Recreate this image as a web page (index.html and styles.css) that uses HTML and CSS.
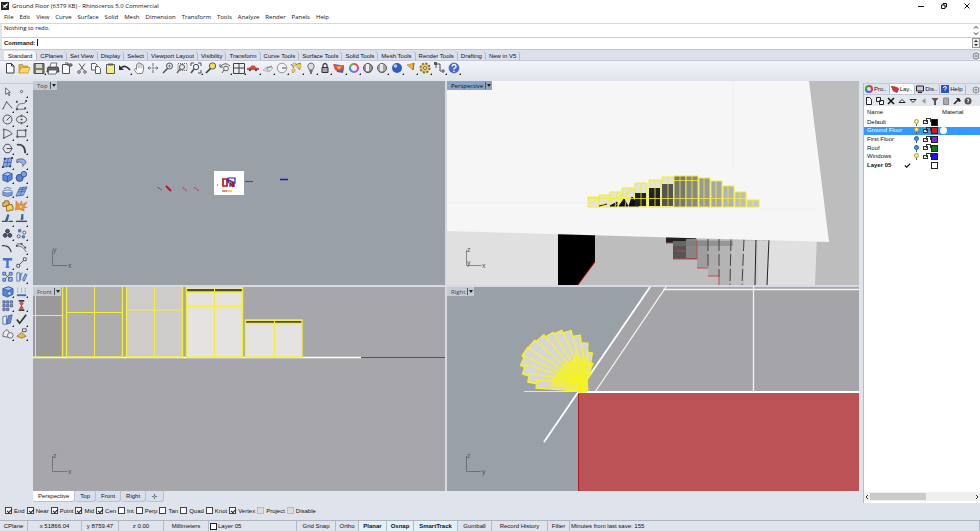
FILE: index.html
```html
<!DOCTYPE html>
<html lang="en">
  <head>
    <meta charset="UTF-8" />
    <meta name="viewport" content="width=device-width, initial-scale=1.0" />
    <title>Ground Floor (6379 KB) - Rhinoceros 5.0 Commercial</title>
    <link rel="stylesheet" href="styles.css">
  </head>
  <body>
    <header class="titlebar">
      <svg class="app-icon" viewBox="0 0 9 9"><rect width="9" height="9" fill="#222"/><path d="M1 2l2 2 2-1 3-2-1 3-2 1 2 2-3-1-2 1 1-2z" fill="#fff"/></svg>
      <span class="title">Ground Floor (6379 KB) - Rhinoceros 5.0 Commercial</span>
      <div class="window-buttons">
        <button aria-label="Minimize"><svg viewBox="0 0 8 8"><path d="M1 4.5h6" stroke="#111"/></svg></button>
        <button aria-label="Restore"><svg viewBox="0 0 8 8" fill="none" stroke="#111"><path d="M1.500 3h3.500v3.500h-3.500zM3 3v-1.500h3.500v3.500h-1.500"/></svg></button>
        <button aria-label="Close"><svg viewBox="0 0 8 8" stroke="#111"><path d="M1.500 1.500l5 5M6.500 1.500l-5 5"/></svg></button>
      </div>
    </header>

    <nav class="menu">
      <a href="#">File</a><a href="#">Edit</a><a href="#">View</a><a href="#">Curve</a><a href="#">Surface</a><a href="#">Solid</a><a href="#">Mesh</a><a href="#">Dimension</a><a href="#">Transform</a><a href="#">Tools</a><a href="#">Analyze</a><a href="#">Render</a><a href="#">Panels</a><a href="#">Help</a>
    </nav>

    <section class="command">
      <div class="history">
        <span>Nothing to redo.</span>
        <svg class="arrows" viewBox="0 0 8 12" fill="none" stroke="#222"><path d="M2 4l2-2 2 2M2 8l2 2 2-2"/></svg>
      </div>
      <div class="prompt">
        <label for="command">Command:</label>
        <span class="caret"></span>
        <input id="command" type="text" />
        <svg class="arrows" viewBox="0 0 8 10"><rect x=".5" y=".5" width="7" height="9" fill="#eee" stroke="#999"/><path d="M2 4l2-2 2 2zM2 6l2 2 2-2z" fill="#222"/></svg>
      </div>
    </section>

    <nav class="tabs">
      <button class="tab active">Standard</button>
      <button class="tab">CPlanes</button>
      <button class="tab">Set View</button>
      <button class="tab">Display</button>
      <button class="tab">Select</button>
      <button class="tab">Viewport Layout</button>
      <button class="tab">Visibility</button>
      <button class="tab">Transform</button>
      <button class="tab">Curve Tools</button>
      <button class="tab">Surface Tools</button>
      <button class="tab">Solid Tools</button>
      <button class="tab">Mesh Tools</button>
      <button class="tab">Render Tools</button>
      <button class="tab">Drafting</button>
      <button class="tab">New in V5</button>
      <svg class="gear" viewBox="0 0 8 8" fill="none" stroke="#888"><circle cx="4" cy="4" r="3"/><circle cx="4" cy="4" r="1"/></svg>
    </nav>

    <div class="toolbar">
      <button aria-label="New"><svg viewBox="0 0 14 14"><path d="M3.500 2.500h5l2.500 2.500v7h-7.500zM8.500 2.500v2.500h2.500" fill="#fff" stroke="#222"/></svg></button>
      <button aria-label="Open"><svg viewBox="0 0 14 14"><path d="M2 12V3.500h3.500l1 1.500h4.500v2" fill="#e8a91c" stroke="#a87308" stroke-width=".7"/><path d="M2 12l2-5.500h9l-2 5.500z" fill="#ffd84c" stroke="#b0800c" stroke-width=".7"/></svg></button>
      <button class="fly" aria-label="Save"><svg viewBox="0 0 14 14"><path d="M2 2.500h10v10h-10z" fill="#6f6a3c" stroke="#333"/><path d="M4 3h6v4h-6z" fill="#cfd3d8"/><path d="M4 9h6v3h-6z" fill="#ddd"/></svg></button>
      <button aria-label="Print"><svg viewBox="0 0 14 14"><path d="M2 6h10l1 5h-12z" fill="#555" stroke="#222"/><path d="M5 2h6l-1 4H4zM3 9h8l-1 4H2z" fill="#fff" stroke="#333" stroke-width=".8"/></svg></button>
      <button aria-label="Properties"><svg viewBox="0 0 14 14"><path d="M2.500 3.500h7v9h-7zM5 2h3v3" fill="#fff" stroke="#333"/><path d="M8 3l3-1 2 2-2 2-3-1z" fill="#555"/></svg></button>
      <button aria-label="Cut"><svg viewBox="0 0 14 14" fill="none" stroke="#444"><path d="M4 2.500l5 7M10 2.500l-5 7"/><circle cx="4" cy="11" r="1.300"/><circle cx="10" cy="11" r="1.300"/></svg></button>
      <button aria-label="Copy"><svg viewBox="0 0 14 14" fill="#fff" stroke="#444"><path d="M2.500 2.500h4l1.500 1.500v5H2.500z"/><path d="M6.500 5.500h3l2 2v5h-5z"/></svg></button>
      <button aria-label="Paste"><svg viewBox="0 0 14 14"><path d="M3.500 3.500h8v9h-8z" fill="#f8ee6c" stroke="#444"/><path d="M5 2.500h5v2H5z" fill="#444"/></svg></button>
      <button class="fly" aria-label="Undo"><svg viewBox="0 0 14 14"><path d="M3 7q4-4 9 2" fill="none" stroke="#111" stroke-width="1.700"/><path d="M1 4v5h5z" fill="#111"/></svg></button>
      <button aria-label="Pan"><svg viewBox="0 0 14 14"><path d="M5 12.500L2 8.500l1-1L4.500 8.500V3.500l1-.5.7.5V2l1-.5.8.5v1l1-.5.8.5v1l1-.3.7.6V9l-1.300 3.500z" fill="#fff" stroke="#555" stroke-width=".8"/><path d="M6.300 4v3M8 3.500v3.500M9.800 4.500v3" stroke="#666" stroke-width=".6"/></svg></button>
      <button aria-label="Rotate view"><svg viewBox="0 0 14 14" fill="none" stroke="#555"><path d="M2 7h3M9 7h3M7 2v3M7 9v3M3.500 5.500L2 7l1.500 1.500M10.500 5.500L12 7l-1.500 1.500"/><circle cx="7" cy="7" r="1" stroke-width=".7"/></svg></button>
      <button aria-label="Zoom dynamic"><svg viewBox="0 0 14 14" fill="none" stroke="#333"><circle cx="8.500" cy="5" r="3"/><path d="M6.500 7.500L2 12" stroke-width="1.500"/><path d="M8.500 3.500v3M7 5h3" stroke-width=".6"/></svg></button>
      <button aria-label="Zoom window"><svg viewBox="0 0 14 14" fill="none" stroke="#555"><path d="M3 2.500h9v7H3z" stroke-dasharray="1 1"/><circle cx="7" cy="6" r="2.500" fill="#eee" stroke="#333"/><path d="M5 8l-3 4" stroke-width="1.500"/></svg></button>
      <button class="fly" aria-label="Zoom extents"><svg viewBox="0 0 14 14" fill="none" stroke="#333"><path d="M2 5V2h3M9 2h3v3M12 9v3H9"/><circle cx="7" cy="6" r="2.700"/><path d="M5 8l-3 4" stroke-width="1.500"/></svg></button>
      <button aria-label="Zoom selected"><svg viewBox="0 0 14 14"><circle cx="8.500" cy="5" r="3.200" fill="#f2dd3c" stroke="#444"/><path d="M6.500 7.500L2 12" stroke="#222" stroke-width="1.700"/></svg></button>
      <button class="fly" aria-label="Undo view"><svg viewBox="0 0 14 14" fill="none" stroke="#444"><path d="M2 6q5-6 10-1M2 3v3h3"/><circle cx="8" cy="7.500" r="2.400"/><path d="M6 9l-2 3"/></svg></button>
      <button class="fly" aria-label="Four viewports"><svg viewBox="0 0 14 14" fill="#eee" stroke="#222"><path d="M1.500 2.500h11v10h-11zM7 2.500v10M1.500 7h11"/></svg></button>
      <button class="fly" aria-label="Set view"><svg viewBox="0 0 14 14"><path d="M1 7l3-.5 1.500-2h3L10 6.500l3 .5v2H1z" fill="#d42a26"/><circle cx="4" cy="9" r="1.200" fill="#333"/><circle cx="10" cy="9" r="1.200" fill="#333"/></svg></button>
      <button class="fly" aria-label="Set CPlane"><svg viewBox="0 0 14 14" fill="none" stroke="#aaa"><path d="M2 9l4-3 6 1-4 4zM4 7l5 3M7 6l-1 4"/><path d="M6 7l5-2" stroke="#666"/></svg></button>
      <button class="fly" aria-label="Object snap"><svg viewBox="0 0 14 14" fill="none" stroke="#888"><circle cx="7" cy="7" r="4.800" fill="#f2f2f2"/><path d="M7 7h4" stroke="#333"/></svg></button>
      <button class="fly" aria-label="Select"><svg viewBox="0 0 14 14"><path d="M2 3l3 4M4 8v4M8 5l3 4M6 4l6-2" stroke="#555" fill="none"/><path d="M4 2h3v3H4zM8 3h4v4H8zM3 8h3v3H3z" fill="#f3cf2d" stroke="#a58812" stroke-width=".5"/></svg></button>
      <button class="fly" aria-label="Hide"><svg viewBox="0 0 14 14"><path d="M5.500 9q-4-6 1.500-7 5.500 1 1.500 7z" fill="#d9d9d9" stroke="#555"/><path d="M5.500 10h3M6 12h2" stroke="#333" stroke-width="1.500"/></svg></button>
      <button class="fly" aria-label="Lock"><svg viewBox="0 0 14 14"><path d="M5 7V4q2-3 4 0v3" fill="none" stroke="#222" stroke-width="1.300"/><path d="M4 6.500h6v5H4z" fill="#999" stroke="#111"/></svg></button>
      <button class="fly" aria-label="Layers"><svg viewBox="0 0 14 14"><path d="M2 3l6 1 4 3-1 5-6-1z" fill="#2a4aa0"/><path d="M1 3q5 2 11 1v4l-4 2-5-1z" fill="#e3321d"/><path d="M4 5.500l6 0-3 3z" fill="#f6b43a"/></svg></button>
      <button class="fly" aria-label="Object color"><svg viewBox="0 0 14 14" fill="none" stroke-width="2.200"><path d="M7 3a4 4 0 0 1 4 4" stroke="#e4362c"/><path d="M11 7a4 4 0 0 1-4 4" stroke="#b339ce"/><path d="M7 11a4 4 0 0 1-4-4" stroke="#2e70d8"/><path d="M3 7a4 4 0 0 1 4-4" stroke="#39ac3d"/></svg></button>
      <button aria-label="Shade"><svg viewBox="0 0 14 14"><circle cx="7" cy="7" r="4.500" fill="#888" stroke="#333"/><path d="M5 3h3v8H5z" fill="#eee"/><path d="M3 9q4 3 8 0l-2 2.500H5z" fill="#444"/></svg></button>
      <button class="fly" aria-label="Shaded viewport"><svg viewBox="0 0 14 14"><circle cx="7" cy="7" r="4.500" fill="#999" stroke="#444"/><path d="M5 3h3v8H5z" fill="#e8e8e8"/><path d="M3 9q4 3 8 0l-2 2.500H5z" fill="#555"/></svg></button>
      <button class="fly" aria-label="Render"><svg viewBox="0 0 14 14"><circle cx="7" cy="7" r="5" fill="#1445b4"/><circle cx="5.500" cy="5" r="1.800" fill="#a9c8ff"/></svg></button>
      <button class="fly" aria-label="Spotlight"><svg viewBox="0 0 14 14"><path d="M3 4l7-2-1 7z" fill="#f2a71e" stroke="#a26a0a" stroke-width=".6"/><path d="M10 2L9 9" stroke="#555"/></svg></button>
      <button class="fly" aria-label="Options"><svg viewBox="0 0 14 14"><circle cx="7" cy="7" r="4.500" fill="#d9ad3a" stroke="#6b5415" stroke-width="2" stroke-dasharray="2 1.500"/><circle cx="7" cy="7" r="3.500" fill="#e8c555"/><circle cx="7" cy="7" r="1.500" fill="#fff" stroke="#6b5415"/></svg></button>
      <button class="fly" aria-label="Dimension"><svg viewBox="0 0 14 14" fill="none" stroke="#333"><path d="M3 3h4v7h5M3 2v5M10 8v4"/><path d="M1.500 1.500h2v2h-2z" fill="#333"/></svg></button>
      <button class="fly" aria-label="Help"><svg viewBox="0 0 14 14"><circle cx="7" cy="7" r="5" fill="#2756c8" stroke="#173a8e" stroke-width=".6"/><path d="M5 5.500q.5-2 2-2t2 1.500-2 2.500v1" fill="none" stroke="#fff" stroke-width="1.300"/><circle cx="7" cy="10.300" r=".8" fill="#fff"/></svg></button>
    </div>

    <main class="workspace">
      <aside class="sidebar">
        <button aria-label="Cancel"><svg viewBox="0 0 14 14"><path d="M5 3v7l2-1.500 1.500 3 1-.5L8 8h2z" fill="#fff" stroke="#222" stroke-width=".8"/></svg></button>
        <button class="fly" aria-label="Point"><svg viewBox="0 0 14 14"><circle cx="7" cy="7" r="1.200" fill="none" stroke="#444"/></svg></button>
        <button class="fly" aria-label="Polyline"><svg viewBox="0 0 14 14" fill="none" stroke="#333"><path d="M2 11L6 3l6 7"/><path d="M1.500 10.500h1M5.500 3h1"/></svg></button>
        <button class="fly" aria-label="Curve"><svg viewBox="0 0 14 14" fill="none" stroke="#333"><path d="M2 11q0-6 5-6t5-3M2 11h9" stroke-width=".8"/><path d="M1 3h2M11 2h2M1 11h2M10 10h2" stroke-width="2"/></svg></button>
        <button class="fly" aria-label="Circle"><svg viewBox="0 0 14 14" fill="none" stroke="#333"><circle cx="7" cy="7" r="4.800"/><path d="M6 8l5-5"/></svg></button>
        <button class="fly" aria-label="Ellipse"><svg viewBox="0 0 14 14" fill="none" stroke="#333"><ellipse cx="7" cy="7" rx="5.500" ry="3.800"/><path d="M6 7h2M7 2v2M7 10v2" stroke-width="1.500"/></svg></button>
        <button class="fly" aria-label="Arc"><svg viewBox="0 0 14 14" fill="none" stroke="#333"><path d="M3 2.500q7 1 9 5L3 12zM2 2.500h2M2 12h2"/></svg></button>
        <button class="fly" aria-label="Rectangle"><svg viewBox="0 0 14 14" fill="none" stroke="#333"><path d="M2.500 3.500h9v7h-9z"/><path d="M1.500 10.500h2M10.500 3.500h2" stroke-width="2"/></svg></button>
        <button class="fly" aria-label="Polygon"><svg viewBox="0 0 14 14" fill="none" stroke="#333"><path d="M5 2.500h4l3 4.500-3 4.500H5L2 7z"/><path d="M6 7h6"/></svg></button>
        <button class="fly" aria-label="Fillet curves"><svg viewBox="0 0 14 14" fill="none" stroke="#222"><path d="M2 3q9-1 9 9" stroke-width="1.800"/></svg></button>
        <button class="fly" aria-label="Surface"><svg viewBox="0 0 14 14" stroke="#20458e" stroke-width=".8"><path d="M4 3l8-1-2 9-8 1z" fill="#79a1e8"/><path d="M8 2L6 12M3 7h8" fill="none"/><path d="M3 3h2M11 2h2M1 12h2M9 11h2" stroke="#222" stroke-width="2"/></svg></button>
        <button class="fly" aria-label="Surface from edges"><svg viewBox="0 0 14 14" stroke="#334" stroke-width=".8"><path d="M2 4q8-3 10 3l-4 4q0-4-6-4z" fill="#89aef0"/><path d="M2 7q5-2 7 4" fill="#fff"/></svg></button>
        <button class="fly" aria-label="Box"><svg viewBox="0 0 14 14" stroke="#1b3d88" stroke-width=".8"><path d="M2 5l5-2.500 5 1.500v6l-5 3-5-2z" fill="#3f74d6"/><path d="M2 5l5 1.500 5-2.500-5-1.500z" fill="#a4c2ff"/><path d="M7 6.500V13"/></svg></button>
        <button class="fly" aria-label="Sphere"><svg viewBox="0 0 14 14" fill="#3f70cc" stroke="#1b3576"><circle cx="5" cy="8.500" r="3.800"/><circle cx="9.500" cy="4.500" r="3" fill="#6a97ea"/></svg></button>
        <button class="fly" aria-label="Cylinder"><svg viewBox="0 0 14 14" stroke="#2a4a8c" stroke-width=".8"><path d="M2 7v4q5 2.500 10 0V7z" fill="#6f9ceb"/><ellipse cx="7" cy="7" rx="5" ry="1.600" fill="#dfe9ff"/><path d="M3 4q4-3 8 0" fill="none"/></svg></button>
        <button class="fly" aria-label="Mesh"><svg viewBox="0 0 14 14" stroke="#22478f" stroke-width=".8"><path d="M5 3l8-1-4 9-8 1z" fill="#7da5ef"/><path d="M9 2.500L5 12M3 7.500l8-1M4 5l8-1" fill="none"/></svg></button>
        <button aria-label="Join"><svg viewBox="0 0 14 14" fill="#f4ae24" stroke="#7b5206"><path d="M2 4h2V2h4v2h1v3H6v1H2z"/><path d="M6 7h2V6h4v2h1v4H9v1H6z" fill="#ffd254"/></svg></button>
        <button aria-label="Explode"><svg viewBox="0 0 14 14"><path d="M1 2l4 4 2-4 1 4 5-3-3 5 3 1-4 1 1 3-6-2-4 1 1-4z" fill="#f1891d" stroke="#b45808" stroke-width=".5"/><path d="M5 7l3 1-2 2z" fill="#ffe35b"/></svg></button>
        <button class="fly" aria-label="Trim"><svg viewBox="0 0 14 14"><path d="M1 9h5M8 9h5" stroke="#333" stroke-width="1.500"/><path d="M7 1l2 1-2 8-3-1z" fill="#204a9a"/></svg></button>
        <button class="fly" aria-label="Split"><svg viewBox="0 0 14 14"><path d="M1 9h12" stroke="#333" stroke-width="1.500"/><path d="M7 1h2v6l-3 1z" fill="#204a9a"/></svg></button>
        <button class="fly" aria-label="Group"><svg viewBox="0 0 14 14" fill="#2b457f" stroke="#111"><circle cx="7" cy="4.500" r="2"/><circle cx="4.500" cy="9" r="2"/><circle cx="9.500" cy="9" r="2"/></svg></button>
        <button class="fly" aria-label="Ungroup"><svg viewBox="0 0 14 14"><circle cx="5" cy="4" r="2" fill="#456bb8"/><circle cx="10" cy="6" r="1.600" fill="#fff" stroke="#333"/><circle cx="4" cy="10" r="1.600" fill="#fff" stroke="#333"/><circle cx="9" cy="10.500" r="2" fill="#456bb8"/></svg></button>
        <button aria-label="Blend"><svg viewBox="0 0 14 14" fill="none" stroke="#222"><path d="M2 4q7-1 9 7M1 4h3" stroke-width="1.300"/></svg></button>
        <button class="fly" aria-label="Edit points"><svg viewBox="0 0 14 14" fill="none" stroke="#333"><path d="M2 4q7 0 10 7M2 2h5l4 4" stroke-width=".8"/><path d="M1 4h2M6 2h2M10 6h2" stroke-width="2"/></svg></button>
        <button class="fly" aria-label="Text object"><svg viewBox="0 0 14 14" fill="none" stroke="#2c5fc4" stroke-width="2.500"><path d="M2 3.500h10M7 4v8"/><path d="M5 12h4" stroke-width="1.500"/></svg></button>
        <button class="fly" aria-label="Move"><svg viewBox="0 0 14 14" stroke="#333"><path d="M4 10l6-6"/><path d="M2 9h3v3H2zM9 2h3v3H9z" fill="#fff"/></svg></button>
        <button aria-label="Copy objects"><svg viewBox="0 0 14 14" stroke="#2a4b91" fill="#8eb2f3"><path d="M2 2.500h3v3H2zM9 2.500h3v3H9zM2 9h3v3H2zM8 8h4v4H8z"/><path d="M5 5l4 4M9 5L5 9"/></svg></button>
        <button class="fly" aria-label="Rotate"><svg viewBox="0 0 14 14" stroke="#2a4b91" stroke-width=".8"><path d="M2 3h3v9H2z" fill="#dce7ff"/><path d="M8 11l3-7 2 1-3 7zM6 11V4l2-1" fill="#7fa6ed"/></svg></button>
        <button class="fly" aria-label="Boolean"><svg viewBox="0 0 14 14" stroke="#1b3d88" stroke-width=".8"><path d="M2 4l6-2 5 2v6l-6 3-5-2z" fill="#3f74d6"/><path d="M2 4l6-2 5 2-5 2z" fill="#9dbeff"/><circle cx="9" cy="9" r="2" fill="#c9dbff"/></svg></button>
        <button class="fly" aria-label="Offset"><svg viewBox="0 0 14 14" fill="none"><path d="M2 11h10" stroke="#2456ba" stroke-width="2"/><path d="M3 3v5M7 3v5M11 3v5" stroke="#777" stroke-dasharray="1 1"/></svg></button>
        <button class="fly" aria-label="Array"><svg viewBox="0 0 14 14" fill="#6e93d8" stroke="#263e70" stroke-width=".8"><path d="M2 2h2.500v2.500H2zM6 2h2.500v2.500H6zM10 2h2.500v2.500H10zM2 6h2.500v2.500H2zM6 6h2.500v2.500H6zM10 6h2.500v2.500H10zM2 10h2.500v2.500H2zM6 10h2.500v2.500H6z"/></svg></button>
        <button class="fly" aria-label="Align"><svg viewBox="0 0 14 14"><path d="M4 2h6M4 12h6" stroke="#222" stroke-width="2"/><path d="M7 2l2 3-2 2 2 3-2 2-2-2 2-3-2-2z" fill="#d53a35" stroke="#711" stroke-width=".5"/></svg></button>
        <button class="fly" aria-label="Bend"><svg viewBox="0 0 14 14" stroke="#23427f" stroke-width=".8"><path d="M2 4l4-1v9H2z" fill="#e5edff"/><path d="M8 3l4-1-2 9-4 1z" fill="#4a7bdd"/></svg></button>
        <button class="fly" aria-label="Check"><svg viewBox="0 0 14 14" fill="none" stroke="#111" stroke-width="1.800"><path d="M2 7l3 4 7-9"/></svg></button>
        <button class="fly" aria-label="Project curve"><svg viewBox="0 0 14 14" fill="#eee" stroke="#555"><path d="M2 10q0-6 5-7l2 3-2 5z"/><circle cx="10" cy="9" r="3"/></svg></button>
        <button class="fly" aria-label="Plane"><svg viewBox="0 0 14 14"><path d="M8 2h4v3H8z" fill="#fff" stroke="#333"/><path d="M2 10l5-4 5 4-5 2z" fill="#f0b432" stroke="#80590b" stroke-width=".8"/></svg></button>
      </aside>

      <section class="viewports">
        <article class="viewport">
          <button class="view-label">Top<span class="drop"></span></button>
          <svg class="scene" viewBox="0 0 413 204" preserveAspectRatio="xMinYMin slice">
            <rect width="413" height="204" fill="#9aa0a8"/>
            <rect x="181" y="90" width="30" height="24" fill="#fff"/>
            <g fill="none" stroke="#c3131b" stroke-width="1">
              <path d="M124 106l5 3M149 106l5 4M161 106l5 4" stroke="#b0474e"/>
              <path d="M133 105l5 5" stroke-width="2"/>
              <path d="M190 98h4v7h-4zM195 99l5 2v5M197 102l3 4" stroke-width="1.700"/>
              <path d="M189 110h5"/>
            </g>
            <path d="M195 99v-2h7v5h-6zM201 102v4M197 103v3" fill="none" stroke="#1b1cc8" stroke-width="1.200"/>
            <path d="M194 110h5" stroke="#e9e02c" stroke-width="2"/>
            <path d="M212 100.500h8" stroke="#3d3fc4"/>
            <path d="M247 98.500h8" stroke="#1416d6" stroke-width="1.500"/>
            <path d="M184 104h1" stroke="#444"/>
            <path d="M19.500 169v15.500h15" fill="none" stroke="#6d7279"/>
            <text x="20" y="171" class="axis">y</text><text x="35" y="187" class="axis">x</text>
          </svg>
        </article>

        <article class="viewport">
          <button class="view-label current">Perspective<span class="drop"></span></button>
          <svg class="scene" viewBox="0 0 413 204" preserveAspectRatio="xMinYMin slice">
            <rect width="413" height="204" fill="#bdbdbd"/>
            <path d="M0 140h111v64H0zM321 155h49l-2 49h-51z" fill="#e0e0e0"/>
            <path d="M111 150h37v31l-17 23h-20z" fill="#000"/>
            <path d="M148 181l-17 23" stroke="#d22"/>
            <g>
              <path d="M219 154h30v8h-30z" fill="#222"/>
              <path d="M226 160h24v18h-24z" fill="#555"/>
              <path d="M239 158h11v19h-11z" fill="#858585"/>
              <path d="M250 159h11v28h-11z" fill="#9e9e9e"/>
              <path d="M261 159h11v36h-11z" fill="#acacac"/>
              <path d="M272 159h12v45h-12z" fill="#b4b4b4"/>
              <path d="M284 160h13v44h-13z" fill="#c0c0c0"/>
              <path d="M297 160h14v44h-14z" fill="#cacaca"/>
              <path d="M311 160h10v44h-10z" fill="#d2d2d2"/>
              <path d="M226 160h60v5h-60z" fill="#777" opacity=".5"/>
              <path d="M261 158v28M272 158v38M284 158l-1 46M297 158l-2 46" fill="none" stroke="#444" stroke-dasharray="12 3"/>
              <path d="M309 158l-1 46M322 158l-2 46" stroke="#222" stroke-width="1"/>
              <path d="M219 162h8M229 170h10M226 178h24v-18M250 187h11M261 195h11v9" fill="none" stroke="#c24a4a"/>
            </g>
            <path d="M0 0h362l20 161L0 150z" fill="#f6f6f6"/>
            <path d="M0 122h140M312 128h58M286 0v90" stroke="#efefef"/>
            <!-- stair treads seen through the slab -->
            <g stroke="#f2ee2a" fill="#e4e4d8">
              <path d="M141 116h11v10h-11z"/><path d="M152 114h11v12h-11z"/><path d="M163 111h11v15h-11z"/><path d="M175 107h12v19h-12z"/>
              <path d="M188 102h12v24h-12z"/><path d="M202 99h12v27h-12z"/><path d="M215 96h12v30h-12z"/>
            </g>
            <path d="M152 125l8-2M163 125l7-4v4zM172 125l5-7 4 7zM182 125l3-9 7 9z" fill="#111" stroke="#111"/>
            <path d="M188 112h11v13h-11zM202 107h11v18h-11z" fill="#222"/>
            <path d="M215 103h11v22h-11z" fill="#555"/>
            <g stroke="#f2ee2a">
              <path d="M227 95h12v31h-12z" fill="#777"/><path d="M239 95h12v31h-12z" fill="#888"/>
              <path d="M252 97h11v29h-11z" fill="#999"/><path d="M264 100h11v26h-11z" fill="#a7a7a7"/>
              <path d="M276 105h11v21h-11z" fill="#b3b3b3"/><path d="M288 111h11v15h-11z" fill="#bdbdbd"/>
              <path d="M300 119h12v7h-12z" fill="#c8c8c8"/>
              <path d="M141 117.500h158M227 99.500h24M233 95v31M245 95v31M257 97v29M269 100v26M281 105v21M293 111v15M306 119v7M194 102v24M208 99v27M221 96v30M181 107l-3 19M170 111l-2 15" fill="none" stroke-width=".8"/>
              <path d="M142 122l22-9M155 124l32-15M168 125l20-19" fill="none" stroke-width=".6"/>
            </g>
            <path d="M19.500 169v15.500h15" fill="none" stroke="#888"/>
            <text x="20" y="171" class="axis">z</text><text x="20" y="184" class="axis">y</text><text x="35" y="187" class="axis">x</text>
          </svg>
        </article>

        <article class="viewport">
          <button class="view-label">Front<span class="drop"></span></button>
          <svg class="scene" viewBox="0 0 413 204" preserveAspectRatio="xMinYMin slice">
            <rect width="413" height="204" fill="#a7a6aa"/>
            <path d="M0 0h30v70H0z" fill="#999"/>
            <path d="M33 0h57v70H33z" fill="#aeaeae"/>
            <path d="M93 0h57v70H93z" fill="#cecccb"/>
            <path d="M153 0h57v70h-57z" fill="#e4e3e2"/>
            <path d="M213 33h56v37h-56z" fill="#e4e3e2"/>
            <path d="M153 2h57v3h-57zM213 34h56v2h-56z" fill="#4c4c38"/>
            <path d="M0 70.500h328" stroke="#fff" stroke-width="1.500"/>
            <path d="M328 70.500h85" stroke="#c5222a"/>
            <g fill="none" stroke="#f4ef35">
              <path d="M2.500 0v70M0 28.500h30M0 70h30M33 25.500h57M61.500 0v70M93 23h57M121.500 0v70M153 19.500h57M181.500 0v70M241.500 33v37" stroke-width="1"/>
              <path d="M29.500 0v70M33.500 0v70h56V0M93.500 0v70h56V0M153.500 0v70h56V0M153 .500h57M154 5h55M212.500 33h56.500v37h-56.500zM213 36.500h56" stroke-width="1.400"/>
            </g>
            <path d="M19.500 169v15.500h15" fill="none" stroke="#77767a"/>
            <text x="20" y="171" class="axis">z</text><text x="35" y="187" class="axis">x</text>
          </svg>
        </article>

        <article class="viewport">
          <button class="view-label">Right<span class="drop"></span></button>
          <svg class="scene" viewBox="0 0 413 204" preserveAspectRatio="xMinYMin slice">
            <rect width="413" height="204" fill="#9aa0a8"/>
            <path d="M203 0h210v105H131z" fill="#a5a4a8"/>
            <path d="M131 106h282v98H131z" fill="#bb5356"/>
            <path d="M131.500 106v98" stroke="#b01c24"/>
            <path d="M216 2.500h197M306.500 0v104M219 0l-71 105" fill="none" stroke="#f4f4f4" stroke-width="1.300"/>
            <path d="M77 104.500h54" stroke="#e2e2e2"/>
            <path d="M131 105h282M203 0L97 155" stroke="#fff" stroke-width="1.800"/>
            <g fill="#d6d6da" stroke="#f8f41c" stroke-width="1.300" transform="translate(131 104)">
              <rect width="24" height="3" transform="rotate(297)"/>
              <rect width="31" height="4" transform="rotate(291)"/>
              <rect width="40" height="7" transform="rotate(281)"/>
              <rect width="48" height="9" transform="rotate(271)"/>
              <rect width="55" height="10" transform="rotate(262)"/>
              <rect width="60" height="10" transform="rotate(254)"/>
              <rect width="62" height="10" transform="rotate(246)"/>
              <rect width="63" height="10" transform="rotate(238)"/>
              <rect width="65" height="10" transform="rotate(230)"/>
              <rect width="66" height="10" transform="rotate(221)"/>
              <rect width="66" height="10" transform="rotate(212)"/>
              <rect width="63" height="10" transform="rotate(204)"/>
              <rect width="58" height="10" transform="rotate(197)"/>
              <rect width="51" height="9" transform="rotate(190)"/>
              <rect width="42" height="8" transform="rotate(184)"/>
              <path d="M0 0l-28-5 2-9 8-6 4-8 8-2 4-9 5 6 5-3 4 9-6 14z" fill="#f8f41c" fill-opacity=".7" stroke="none"/>
            </g>
            <path d="M19.500 169v15.500h15" fill="none" stroke="#6d7279"/>
            <text x="20" y="171" class="axis">z</text><text x="35" y="187" class="axis">y</text>
          </svg>
        </article>
      </section>

      <aside class="panel">
        <nav class="panel-tabs">
          <button><svg viewBox="0 0 8 8" fill="none" stroke-width="2"><path d="M4 1a3 3 0 0 1 3 3" stroke="#e33"/><path d="M7 4a3 3 0 0 1-3 3" stroke="#b3c"/><path d="M4 7a3 3 0 0 1-3-3" stroke="#27d"/><path d="M1 4a3 3 0 0 1 3-3" stroke="#3a3"/></svg>Pro..</button>
          <button class="active"><svg viewBox="0 0 8 8"><path d="M0 1l5 1 3 2-2 4-4-2z" fill="#2a4aa0"/><path d="M0 1l6 1 2 2-3 3-3-2z" fill="#e3321d"/></svg>Lay..</button>
          <button><svg viewBox="0 0 8 8"><path d="M.500 1h7v5h-7z" fill="#ccd" stroke="#222"/><path d="M2 7.500h4" stroke="#222"/></svg>Dis..</button>
          <button><svg viewBox="0 0 8 8"><path d="M0 0h8v8H0z" fill="#2b55bf"/><path d="M2.500 3q0-1.500 1.500-1.500t1.500 1.500L4 4.500v1" fill="none" stroke="#fff"/></svg>Help</button>
          <svg class="gear" viewBox="0 0 8 8" fill="none" stroke="#888"><circle cx="4" cy="4" r="3"/><circle cx="4" cy="4" r="1"/></svg>
        </nav>
        <div class="panel-tools">
          <button aria-label="New layer"><svg viewBox="0 0 8 8" fill="#fff" stroke="#222"><path d="M1.500.500h3l2 2v5h-5z"/></svg></button>
          <button aria-label="New sublayer"><svg viewBox="0 0 8 8" fill="#fff" stroke="#222"><path d="M.500.500h4v4h-4zM3.500 3.500h4v4h-4z"/></svg></button>
          <button aria-label="Delete"><svg viewBox="0 0 8 8" stroke="#111" stroke-width="1.500"><path d="M1 1l6 6M7 1L1 7"/></svg></button>
          <button aria-label="Move up"><svg viewBox="0 0 8 8" fill="#fff" stroke="#222"><path d="M1 5.500l3-3 3 3z"/></svg></button>
          <button aria-label="Move down"><svg viewBox="0 0 8 8" fill="#fff" stroke="#222"><path d="M1 2.500l3 3 3-3z"/></svg></button>
          <button aria-label="Move left"><svg viewBox="0 0 8 8"><path d="M5.500 1v6L2 4z" fill="#999"/></svg></button>
          <button aria-label="Filter"><svg viewBox="0 0 8 8"><path d="M.500 1h7L5 4v4H3V4z" fill="#555"/></svg></button>
          <button aria-label="List"><svg viewBox="0 0 8 8"><path d="M1.500 1h5v6.500h-5z" fill="#aaa" stroke="#888"/></svg></button>
          <button aria-label="Tools"><svg viewBox="0 0 8 8"><path d="M1 7l4-4" stroke="#222" stroke-width="1.600"/><path d="M3 1l3 0 2 3-2 1z" fill="#222"/></svg></button>
          <button aria-label="Help"><svg viewBox="0 0 8 8"><circle cx="4" cy="4" r="3.500" fill="#555"/><path d="M3 3q1-1.500 2 0L4 4.500v1" fill="none" stroke="#fff"/></svg></button>
        </div>
        <table class="layers">
          <thead><tr><th class="name">Name</th><th class="check"></th><th></th><th></th><th></th><th class="material">Material</th></tr></thead>
          <tbody>
            <tr><td>Default</td><td></td><td><i class="bulb"></i></td><td><i class="lock"></i></td><td><i class="swatch black"></i></td><td></td></tr>
            <tr class="selected"><td>Ground Floor</td><td></td><td><i class="bulb"></i></td><td><i class="lock"></i></td><td><i class="swatch red"></i></td><td><i class="dot"></i></td></tr>
            <tr><td>First Floor</td><td></td><td><i class="bulb off"></i></td><td><i class="lock"></i></td><td><i class="swatch purple"></i></td><td></td></tr>
            <tr><td>Roof</td><td></td><td><i class="bulb off"></i></td><td><i class="lock"></i></td><td><i class="swatch green"></i></td><td></td></tr>
            <tr><td>Windows</td><td></td><td><i class="bulb"></i></td><td><i class="lock"></i></td><td><i class="swatch blue"></i></td><td></td></tr>
            <tr class="bold"><td>Layer 05</td><td><svg viewBox="0 0 8 8" fill="none" stroke="#111" stroke-width="1.300"><path d="M1 4l2 2 4-4"/></svg></td><td></td><td></td><td><i class="swatch"></i></td><td></td></tr>
          </tbody>
        </table>
        <div class="scroll">
          <svg viewBox="0 0 6 8" fill="none" stroke="#333"><path d="M4 2L2 4l2 2"/></svg>
          <span class="thumb"></span>
          <svg viewBox="0 0 6 8" fill="none" stroke="#333"><path d="M2 2l2 2-2 2"/></svg>
        </div>
      </aside>

      <nav class="view-tabs">
        <button class="active">Perspective</button><button>Top</button><button>Front</button><button>Right</button><button aria-label="Add viewport"><svg viewBox="0 0 8 8" fill="none" stroke="#666"><path d="M4 1v6M1 4h6"/><circle cx="4" cy="4" r="1" fill="#fff"/></svg></button>
      </nav>
    </main>

    <form class="osnaps">
      <label><input type="checkbox" checked />End</label>
      <label><input type="checkbox" checked />Near</label>
      <label><input type="checkbox" checked />Point</label>
      <label><input type="checkbox" checked />Mid</label>
      <label><input type="checkbox" checked />Cen</label>
      <label><input type="checkbox" />Int</label>
      <label><input type="checkbox" />Perp</label>
      <label><input type="checkbox" />Tan</label>
      <label><input type="checkbox" />Quad</label>
      <label><input type="checkbox" />Knot</label>
      <label><input type="checkbox" checked />Vertex</label>
      <label><input type="checkbox" disabled />Project</label>
      <label><input type="checkbox" disabled />Disable</label>
    </form>

    <footer class="status">
      <span>CPlane</span>
      <span>x 51866.04</span>
      <span>y 8759.47</span>
      <span>z 0.00</span>
      <span>Millimeters</span>
      <span class="layer"><i class="swatch"></i>Layer 05</span>
      <button>Grid Snap</button>
      <button>Ortho</button>
      <button class="on">Planar</button>
      <button class="on">Osnap</button>
      <button class="on">SmartTrack</button>
      <button>Gumball</button>
      <button>Record History</button>
      <button>Filter</button>
      <span class="message">Minutes from last save: 155</span>
    </footer>
  </body>
</html>
```

FILE: styles.css
```css
* {
  margin: 0;
  padding: 0;
  box-sizing: border-box;
}

body {
  display: flex;
  flex-direction: column;
  height: 100vh;
  overflow: hidden;
  background: #dfe3eb;
  color: #111;
  font-family: "Liberation Sans", Arial, sans-serif;
  font-size: 6px;
  line-height: 8px;
}

button,
input {
  border: none;
  background: none;
  color: inherit;
  font: inherit;
}

a {
  color: inherit;
  text-decoration: none;
}

svg {
  display: block;
  flex: none;
}

/* Title and menu */
.titlebar {
  display: flex;
  align-items: center;
  height: 12px;
  padding-left: 1px;
  background: #fff;
  font-family: "Open Sans", "Noto Sans", sans-serif;
}

.app-icon {
  width: 8px;
  height: 8px;
  margin-right: 3px;
}

.window-buttons {
  display: flex;
  gap: 15px;
  margin-left: auto;
  padding-right: 9px;
}

.window-buttons svg {
  width: 8px;
  height: 8px;
}

.menu {
  display: flex;
  gap: 6px;
  height: 11px;
  padding: 1px 4px;
  background: #fff;
  font-family: "Open Sans", "Noto Sans", sans-serif;
}

/* Command line */
.command {
  padding-left: 2px;
  border-top: 1px solid #d5d8de;
}

.history,
.prompt {
  display: flex;
  background: #fff;
  padding-left: 2px;
}

.history {
  height: 13px;
  font-family: "Open Sans", "Noto Sans", sans-serif;
}

.prompt {
  align-items: center;
  height: 12px;
  padding-bottom: 2px;
  border-top: 1px solid #c8ccd4;
}

.prompt label {
  font-weight: bold;
}

.prompt input {
  flex: 1;
  min-width: 0;
  outline: none;
}

.caret {
  width: 1px;
  height: 7px;
  margin-left: 2px;
  background: #111;
}

.arrows {
  width: 8px;
  margin-left: auto;
}

/* Toolbar tabs */
.tabs {
  display: flex;
  align-items: flex-end;
  height: 12px;
  padding-left: 4px;
  border-top: 1px solid #c3c7d0;
  border-bottom: 1px solid #c3c9d6;
  background: #dbe0ea;
}

.tab {
  height: 9px;
  padding: 0 3px;
  border-right: 1px solid #b4bac8;
  border-radius: 0 4px 0 0;
  background: #d9dfec;
  white-space: nowrap;
}

.tab.active {
  padding: 0 4px;
  background: #f7f8fb;
}

.gear {
  width: 8px;
  height: 8px;
  margin-left: auto;
}

.toolbar {
  display: grid;
  grid-template-columns: repeat(32, 1fr);
  height: 20px;
  padding: 0 calc(100% - 461px) 8px 3px;
  background: linear-gradient(#f2f4f9, #dfe3eb);
}

.toolbar button,
.sidebar button {
  position: relative;
  display: flex;
  align-items: center;
  justify-content: center;
}

.toolbar svg {
  width: 14px;
  height: 14px;
}

.toolbar svg,
.sidebar svg {
  opacity: 0.85;
}

.fly::after {
  content: "";
  position: absolute;
  right: 0;
  bottom: 0;
  border: 1px solid #222;
  border-top-color: transparent;
  border-left-color: transparent;
}

/* Main area */
.workspace {
  flex: 1;
  min-height: 0;
  display: grid;
  grid-template-columns: 33px 1fr 117px;
  grid-template-rows: 1fr 12px;
}

.sidebar {
  display: grid;
  grid-template-columns: 14px 14px;
  grid-template-rows: repeat(18, 1fr);
  grid-row: 1 / 3;
  height: 258px;
  margin-top: 2px;
  border-top: 1px solid #c5cad4;
}

.sidebar svg {
  width: 13px;
  height: 13px;
}

.viewports {
  display: grid;
  grid-template-columns: 1fr 1fr;
  grid-template-rows: 1fr 1fr;
  gap: 2px;
  min-height: 0;
  margin-right: 4px;
  background: #d5dae3;
}

.viewport {
  position: relative;
  min-height: 0;
  overflow: hidden;
}

.scene {
  width: 100%;
  height: 100%;
}

.axis {
  fill: #55585e;
  font-size: 7px;
}

.view-label {
  position: absolute;
  top: 0;
  left: 0;
  display: flex;
  align-items: center;
  height: 9px;
  padding-left: 4px;
  background: #c5cad2;
  color: #444;
  font-family: "Open Sans", "Noto Sans", sans-serif;
}

.view-label.current {
  background: #8ba5c5;
  color: #111;
}

.drop {
  display: flex;
  height: 7px;
  margin-left: 2px;
  padding: 2px 1px;
  border-left: 1px solid #555;
}

.drop::after {
  content: "";
  border: 2px solid transparent;
  border-top: 3px solid #222;
}

.view-tabs {
  grid-column: 2;
  display: flex;
  align-items: flex-start;
}

.view-tabs button {
  height: 11px;
  padding: 0 5px;
  border-right: 1px solid #bac0cc;
  border-bottom: 1px solid #bac0cc;
  border-radius: 0 0 3px 3px;
  background: #d7deec;
}

.view-tabs .active {
  background: #fff;
}

.view-tabs svg {
  width: 7px;
  height: 7px;
}

/* Layer panel */
.panel {
  grid-column: 3;
  grid-row: 1 / 3;
  display: flex;
  flex-direction: column;
  margin-top: 2px;
  border-left: 1px solid #b8bdc8;
  background: #fff;
}

.panel-tabs {
  display: flex;
  align-items: flex-end;
  height: 12px;
  border-top: 1px solid #c5cad4;
  border-bottom: 1px solid #c5cad4;
  background: #dfe3eb;
}

.panel-tabs button {
  display: flex;
  align-items: center;
  gap: 1px;
  height: 10px;
  padding: 0 2px 0 1px;
  border-right: 1px solid #b4bac8;
  border-radius: 0 3px 0 0;
}

.panel-tabs .active {
  background: #fff;
}

.panel-tabs svg {
  width: 8px;
  height: 8px;
}

.panel-tools {
  display: flex;
  gap: 3px;
  height: 11px;
  padding: 1px;
  background: #e4e7ee;
}

.panel-tools svg {
  width: 8px;
  height: 8px;
}

.layers {
  width: 100%;
  height: 64px;
  border-collapse: collapse;
  table-layout: fixed;
  line-height: 7px;
  text-align: left;
}

.layers th {
  width: 9px;
  height: 12px;
  font-weight: normal;
}

.layers .name {
  width: 40px;
}

.layers .check {
  width: 8px;
}

.layers .material {
  width: auto;
  padding-left: 3px;
}

.layers th:first-child,
.layers td:first-child {
  padding-left: 3px;
  white-space: nowrap;
}

.layers svg {
  width: 7px;
  height: 7px;
}

.layers i {
  display: block;
  margin: 0 auto;
}

.selected {
  background: #3399ff;
  color: #fff;
}

.bold {
  font-weight: bold;
}

.layers .bulb {
  width: 5px;
  height: 5px;
  margin-top: -2px;
  border: 1px solid #a89f3c;
  border-radius: 50%;
  background: #f7f088;
}

.bulb::after {
  content: "";
  display: block;
  width: 1px;
  height: 2px;
  margin: 4px 0 0 1px;
  background: #555;
}

.layers .bulb.off {
  border-color: #1c5da8;
  background: #3b98ea;
}

.lock {
  width: 5px;
  height: 4px;
  border: 1px solid #333;
  background: #eee;
}

.lock::before {
  content: "";
  display: block;
  width: 3px;
  height: 3px;
  margin: -3px 0 0 2px;
  border: 1px solid #333;
  border-bottom: none;
}

.swatch {
  width: 7px;
  height: 7px;
  border: 1px solid #222;
  background: #fff;
}

.black {
  background: #000;
}

.red {
  background: #d31818;
}

.purple {
  background: #7a2bd0;
}

.green {
  background: #0a7a12;
}

.blue {
  background: #1414f0;
}

.layers .dot {
  width: 7px;
  height: 7px;
  margin: 0 1px;
  border-radius: 50%;
  background: #fff;
}

.scroll {
  display: flex;
  align-items: center;
  height: 9px;
  margin-top: auto;
  margin-bottom: 2px;
  background: #f0f0f0;
}

.scroll svg {
  width: 6px;
  height: 8px;
}

.scroll svg:last-child {
  margin-left: auto;
}

.thumb {
  width: 56px;
  height: 7px;
  background: #c9cacc;
}

/* Object snaps */
.osnaps {
  display: flex;
  align-items: center;
  gap: 2px;
  height: 17px;
  padding: 0 0 2px 5px;
}

.osnaps label {
  display: flex;
  align-items: center;
  gap: 2px;
}

.osnaps input {
  appearance: none;
  width: 7px;
  height: 7px;
  border: 1px solid #444;
  background: #fff;
}

.osnaps input:checked::before {
  content: "";
  display: block;
  width: 4px;
  height: 2px;
  margin: 1px 0 0 1px;
  border-left: 1px solid #222;
  border-bottom: 1px solid #222;
  transform: rotate(-45deg);
}

.osnaps input:disabled {
  border-color: #bbb;
  background: #ddd;
}

/* Status bar */
.status {
  display: grid;
  grid-template-columns: 28px 54px 37px 45px 45px 88px 39px 23px 28px 27px 44px 34px 56px 22px 1fr;
  height: 11px;
  border-top: 1px solid #aeb4c0;
}

.status > * {
  border-right: 1px solid #b4bac6;
  text-align: center;
  line-height: 10px;
  white-space: nowrap;
}

.status .layer {
  display: flex;
  align-items: center;
  gap: 1px;
  padding-left: 1px;
}

.status .on {
  background: #e3f1f8;
  font-weight: bold;
}

.status .message {
  padding-left: 1px;
  text-align: left;
}
```
